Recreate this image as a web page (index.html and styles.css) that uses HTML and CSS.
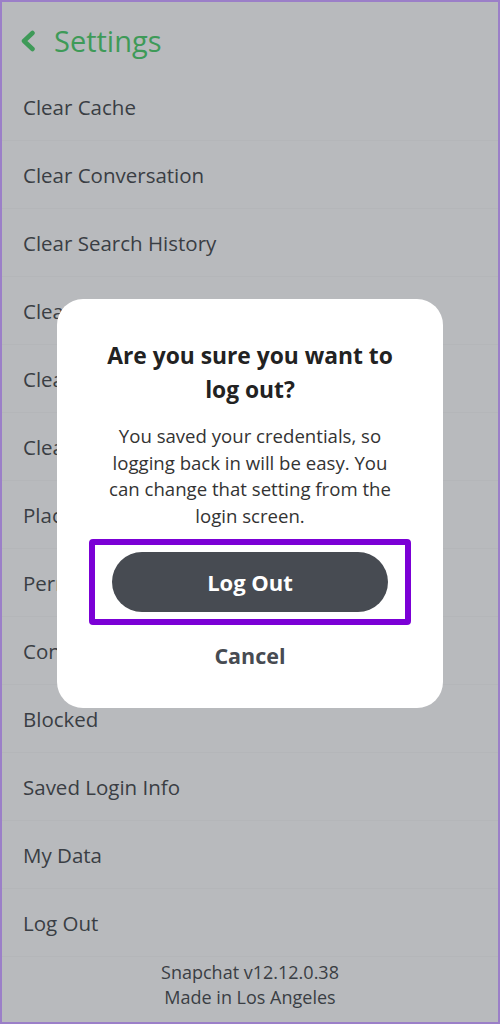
FILE: index.html
```html
<!DOCTYPE html>
<html lang="en">
<head>
  <meta charset="UTF-8" />
  <title>Settings</title>
  <link rel="stylesheet" href="styles.css">
</head>
<body>
  <div class="screen">
    <header class="topbar">
      <svg class="back" width="16" height="22" viewBox="0 0 16 22">
        <path d="M12.5 3 L4 11 L12.5 19" fill="none" stroke="#3e9a58" stroke-width="4.5" stroke-linecap="round" stroke-linejoin="round"/>
      </svg>
      <h1>Settings</h1>
    </header>

    <ul class="menu">
      <li>Clear Cache</li>
      <li>Clear Conversation</li>
      <li>Clear Search History</li>
      <li>Clear Top Friends</li>
      <li>Clear Lens Data</li>
      <li>Clear Scan History</li>
      <li>Places</li>
      <li>Permissions</li>
      <li>Connected Apps</li>
      <li>Blocked</li>
      <li>Saved Login Info</li>
      <li>My Data</li>
      <li>Log Out</li>
    </ul>

    <footer class="about">
      <p>Snapchat v12.12.0.38</p>
      <p>Made in Los Angeles</p>
    </footer>

    <div class="dialog">
      <h2>Are you sure you want to log out?</h2>
      <p>You saved your credentials, so logging back in will be easy. You can change that setting from the login screen.</p>
      <div class="highlight">
        <button class="logout-btn">Log Out</button>
      </div>
      <button class="cancel-btn">Cancel</button>
    </div>
  </div>
</body>
</html>
```

FILE: styles.css
```css
body {
  margin: 0;
  font-family: "Open Sans", "Liberation Sans", sans-serif;
}
.screen {
  position: relative;
  width: 500px;
  height: 1024px;
  box-sizing: border-box;
  border: 2px solid #9b7fc8;
  background-color: #b8babd;
  color: #3a3e44;
  overflow: hidden;
}
.topbar {
  display: flex;
  align-items: center;
  height: 71px;
  padding: 6px 0 0 18px;
  box-sizing: border-box;
}
.back {
  margin-right: 18px;
}
.topbar h1 {
  margin: 0;
  font-size: 29px;
  font-weight: 400;
  color: #3e9a58;
}
.menu {
  list-style: none;
  margin: 0;
  padding: 0;
}
.menu li {
  height: 68px;
  line-height: 68px;
  padding-left: 21px;
  font-size: 20.5px;
  border-bottom: 1px solid #b4b6b9;
  box-sizing: border-box;
}
.about {
  text-align: center;
  font-size: 18px;
  padding-top: 3px;
}
.about p {
  margin: 0;
  line-height: 25px;
}
.dialog {
  position: absolute;
  left: 55px;
  top: 297px;
  width: 386px;
  height: 409px;
  box-sizing: border-box;
  background-color: #fff;
  border-radius: 26px;
  padding: 40px 0 0;
  text-align: center;
  color: #222;
}
.dialog h2 {
  margin: 0 auto;
  width: 300px;
  font-size: 22.8px;
  line-height: 34px;
  font-weight: 700;
}
.dialog p {
  margin: 16px auto 0;
  width: 300px;
  font-size: 18.6px;
  line-height: 26.5px;
  color: #333;
}
.highlight {
  margin: 10px auto 0;
  width: 322px;
  box-sizing: border-box;
  border: 6px solid #7b00d6;
  border-radius: 4px;
  padding: 7px 17px;
}
.logout-btn {
  display: block;
  width: 276px;
  height: 60px;
  border: none;
  border-radius: 30px;
  background-color: #474b52;
  color: #fff;
  font-family: inherit;
  font-size: 22px;
  font-weight: 700;
}
.cancel-btn {
  display: block;
  margin: 15px auto 0;
  border: none;
  background: none;
  font-family: inherit;
  font-size: 21.5px;
  font-weight: 700;
  line-height: 30px;
  color: #474b52;
}
```
